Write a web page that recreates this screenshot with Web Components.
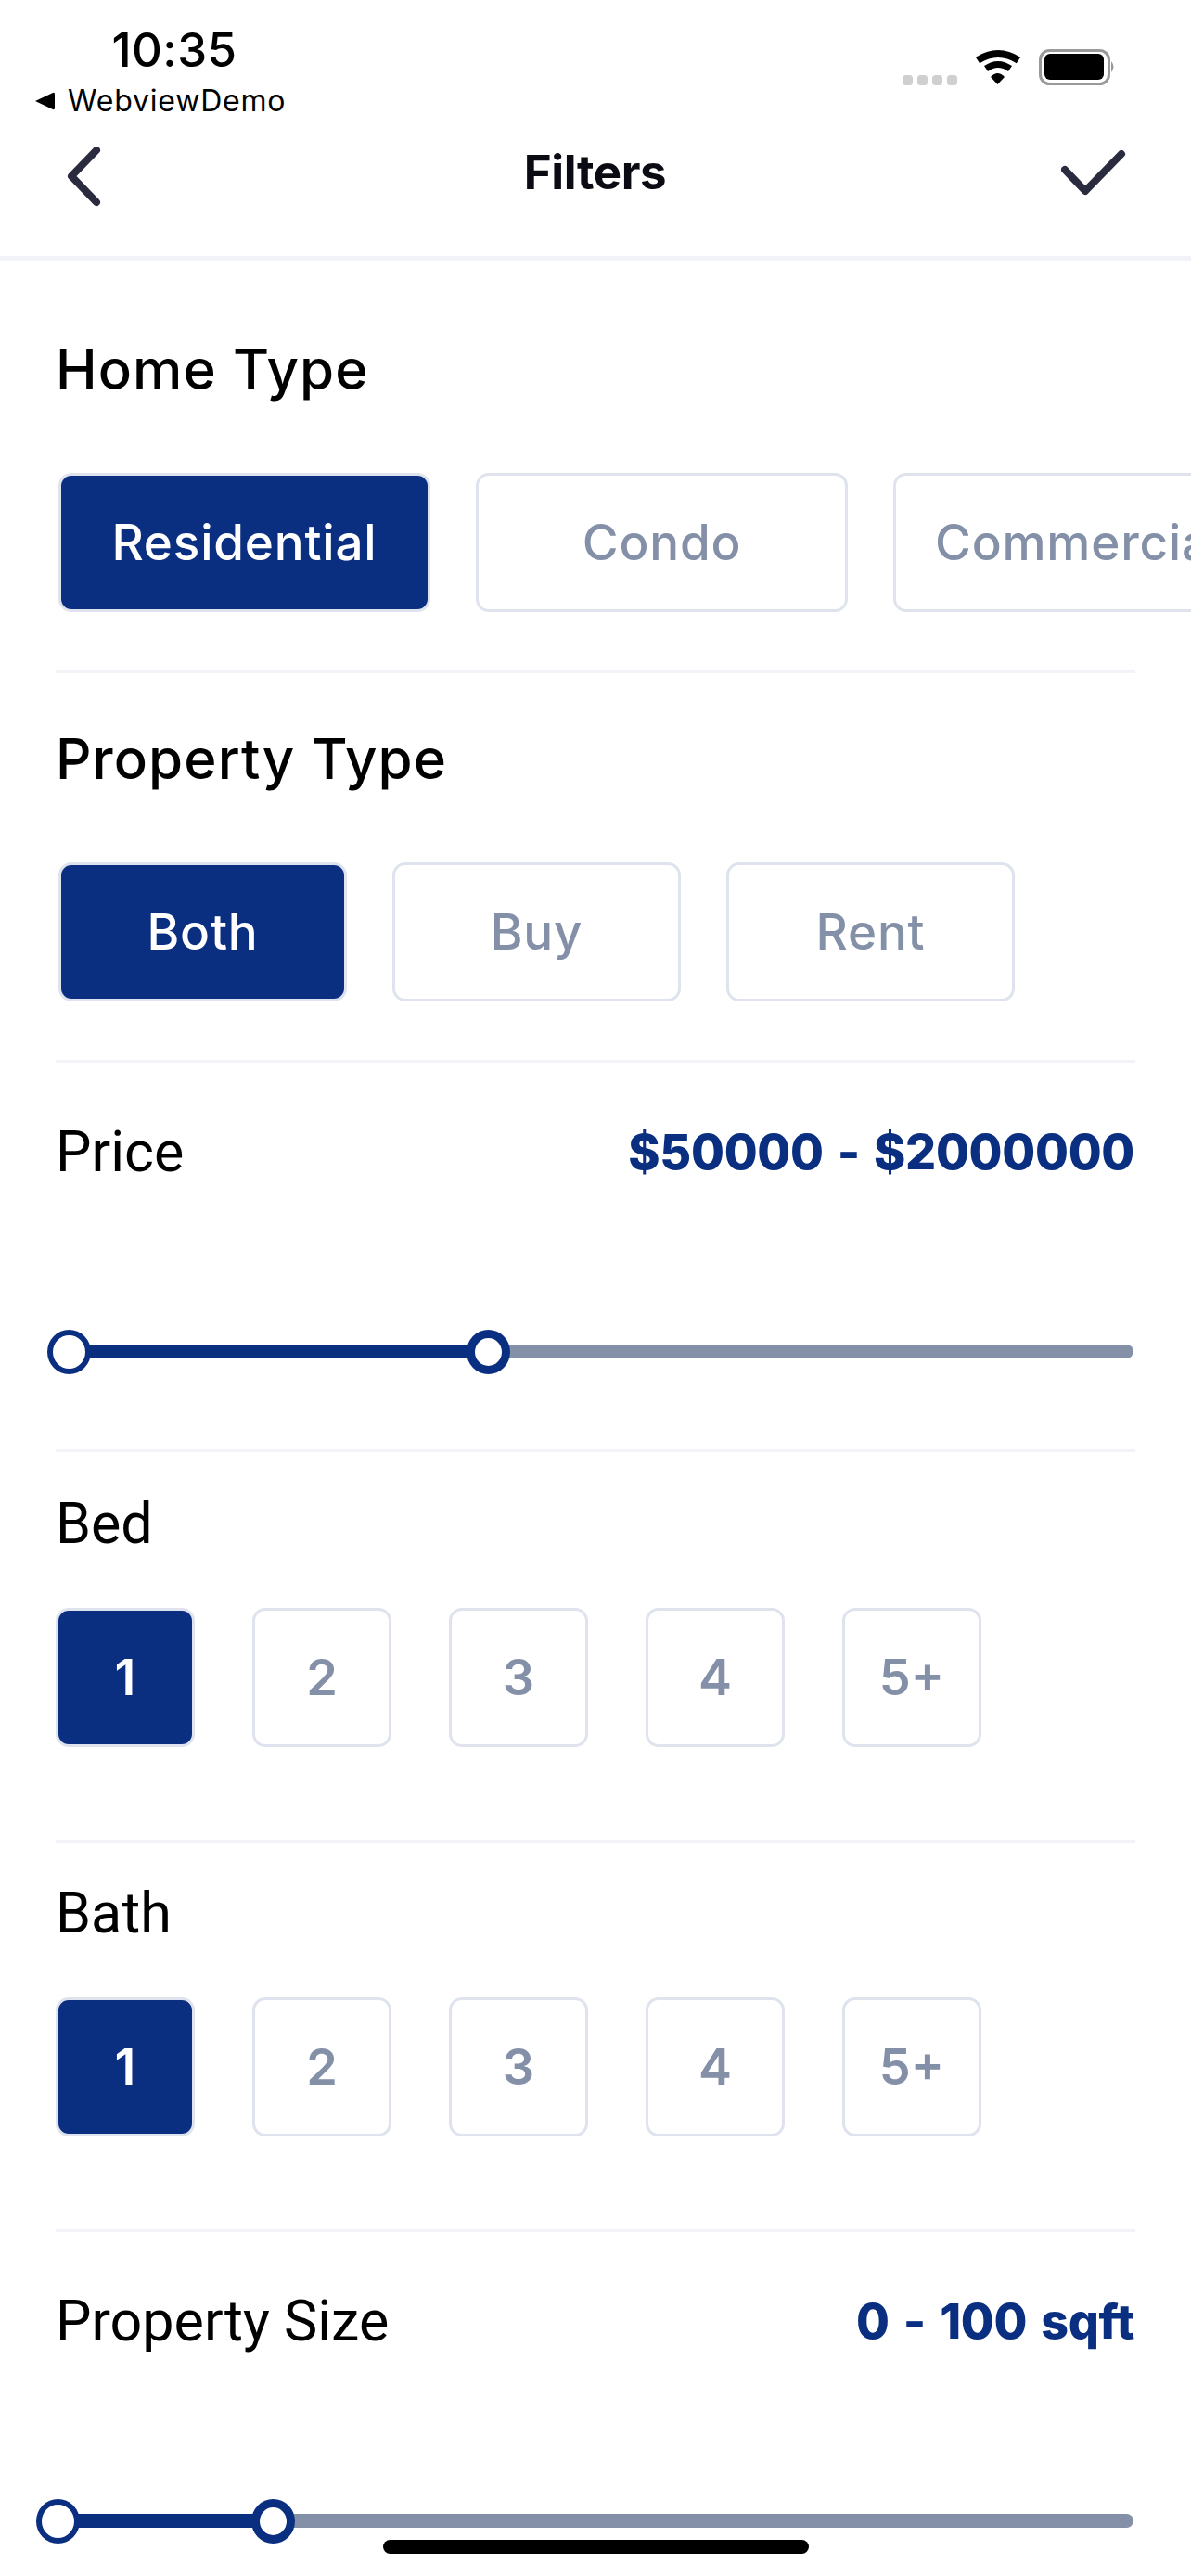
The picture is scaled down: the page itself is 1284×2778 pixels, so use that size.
<!DOCTYPE html>
<html lang="en">
<head>
<meta charset="utf-8">
<title>Filters</title>
<style>
  html, body { margin: 0; padding: 0; background: #fff; }
  body { width: 1284px; height: 2778px; overflow: hidden; position: relative; font-family: Inter, "Liberation Sans", sans-serif; }
</style>
</head>
<body>
  <app-header title="Filters"></app-header>

  <filter-section label="Home Type" pad-top="86" gap="82" pad-bottom="63">
    <chip-group size="wide" inset="3">
      <filter-chip active>Residential</filter-chip>
      <filter-chip>Condo</filter-chip>
      <filter-chip>Commercial</filter-chip>
    </chip-group>
  </filter-section>

  <filter-section label="Property Type" pad-top="62" gap="82" pad-bottom="63">
    <chip-group size="mid" inset="3">
      <filter-chip active>Both</filter-chip>
      <filter-chip>Buy</filter-chip>
      <filter-chip>Rent</filter-chip>
    </chip-group>
  </filter-section>

  <filter-section label="Price" value="$50000 - $2000000" plain pad-top="66" gap="162" pad-bottom="81">
    <range-slider low="51" high="503"></range-slider>
  </filter-section>

  <filter-section label="Bed" plain pad-top="47" gap="61" pad-bottom="100">
    <chip-group size="square">
      <filter-chip active>1</filter-chip>
      <filter-chip>2</filter-chip>
      <filter-chip>3</filter-chip>
      <filter-chip>4</filter-chip>
      <filter-chip>5+</filter-chip>
    </chip-group>
  </filter-section>

  <filter-section label="Bath" plain pad-top="46" gap="61" pad-bottom="100">
    <chip-group size="square">
      <filter-chip active>1</filter-chip>
      <filter-chip>2</filter-chip>
      <filter-chip>3</filter-chip>
      <filter-chip>4</filter-chip>
      <filter-chip>5+</filter-chip>
    </chip-group>
  </filter-section>

  <filter-section label="Property Size" value="0 - 100 sqft" plain pad-top="66" gap="162" pad-bottom="0" last>
    <range-slider low="39" high="271"></range-slider>
  </filter-section>

  <home-indicator></home-indicator>

<script>
class AppHeader extends HTMLElement {
  connectedCallback() {
    this.attachShadow({ mode: 'open' }).innerHTML = `
      <style>
        :host { display: block; height: 276px; border-bottom: 6px solid #f2f3f8; color: #000; }
        .status { display: flex; justify-content: space-between; height: 132px; }
        .left { width: 350px; }
        .time { font: 500 51px/56px Inter, sans-serif; text-align: center; padding: 26px 0 0 26px; width: 324px; letter-spacing: 0.4px; }
        .back { display: flex; align-items: center; gap: 13px; padding: 7px 0 0 38px; font: 400 32px/40px Inter, sans-serif; letter-spacing: 0.8px; }
        .icons { padding: 50px 0 0 0; margin-right: 74px; }
        .nav { display: grid; grid-template-columns: 1fr auto 1fr; align-items: center; height: 108px; padding: 0 72px 0 71px; }
        .nav h1 { margin: 0; font: 700 51px/60px Inter, sans-serif; color: #0b0b14; letter-spacing: -0.4px; }
        .nav .done { justify-self: end; margin: 2px -4px 0 0; }
        .nav .prev { margin-top: 10px; }
        svg { display: block; }
      </style>
      <div class="status">
        <div class="left">
          <div class="time">10:35</div>
          <div class="back">
            <svg width="22" height="20" viewBox="0 0 22 20"><path d="M0 10 L19 1 Q21 0 21 3 V17 Q21 20 19 19 Z" fill="#000"/></svg>
            <span>WebviewDemo</span>
          </div>
        </div>
        <div class="icons">
          <svg width="250" height="46" viewBox="0 0 250 46">
            <g fill="#cfcfcf">
              <rect x="13" y="31" width="11" height="11" rx="3.500"/><rect x="29" y="31" width="11" height="11" rx="3.500"/>
              <rect x="45" y="31" width="11" height="11" rx="3.500"/><rect x="61" y="31" width="11" height="11" rx="3.500"/>
            </g>
            <path d="M94 15 Q116 1 138 15" fill="none" stroke="#000" stroke-width="8"/>
            <path d="M103 24 Q116 15 129 24" fill="none" stroke="#000" stroke-width="7"/>
            <path d="M108 33 Q115.500 25 123 33 L115.500 41 Z" fill="#000"/>
            <rect x="161.500" y="4.500" width="74" height="36" rx="10" fill="#fff" stroke="#999" stroke-width="3"/>
            <rect x="166" y="8" width="64" height="28" rx="6" fill="#000"/>
            <path d="M238 16 Q243 22 238 28 Z" fill="#999"/>
          </svg>
        </div>
      </div>
      <div class="nav">
        <svg class="prev" width="50" height="66" viewBox="0 0 50 66"><path d="M33 4 L6 32 L33 60" fill="none" stroke="#2b2b40" stroke-width="8" stroke-linecap="round" stroke-linejoin="round"/></svg>
        <h1>${this.getAttribute('title')}</h1>
        <svg class="done" width="72" height="50" viewBox="0 0 72 50"><path d="M4 21 L26 44 L65 4" fill="none" stroke="#2b2b40" stroke-width="8" stroke-linecap="round" stroke-linejoin="round"/></svg>
      </div>`;
  }
}

class FilterSection extends HTMLElement {
  connectedCallback() {
    const value = this.getAttribute('value');
    const plain = this.hasAttribute('plain');
    this.attachShadow({ mode: 'open' }).innerHTML = `
      <style>
        :host {
          display: block; margin: 0 60px; box-sizing: border-box;
          border-bottom: 3px solid #f2f3f8;
          padding-top: ${this.getAttribute('pad-top')}px;
          padding-bottom: ${this.getAttribute('pad-bottom')}px;
        }
        :host([last]) { border-bottom: 0; }
        .head { display: flex; justify-content: space-between; align-items: center; height: 60px; margin-bottom: ${this.getAttribute('gap')}px; }
        .label { color: #000; }
        .label.poppins { font: 500 60px/60px Inter, sans-serif; letter-spacing: 1.1px; }
        .label.plain { font: 400 61px/60px Roboto, sans-serif; }
        .value { font: 800 52px/60px Inter, sans-serif; color: #0b2f80; letter-spacing: -0.3px; word-spacing: 4px; padding: 2px 1px 0 0; }
      </style>
      <div class="head">
        <span class="label ${plain ? 'plain' : 'poppins'}">${this.getAttribute('label')}</span>
        ${value ? `<span class="value">${value}</span>` : ''}
      </div>
      <slot></slot>`;
  }
}

class ChipGroup extends HTMLElement {
  connectedCallback() {
    const sizes = { wide: [401, 49], mid: [311, 49], square: [150, 62] };
    const [w, gap] = sizes[this.getAttribute('size')];
    const inset = this.getAttribute('inset') || 0;
    this.attachShadow({ mode: 'open' }).innerHTML = `
      <style>
        :host {
          display: flex; gap: ${gap}px; margin-left: ${inset}px; margin-right: -60px;
          overflow: hidden; --chip-w: ${w}px;
          --chip-size: ${w === 150 ? '54px' : '53px'};
          --chip-weight: ${w === 150 ? 600 : 500};
          --chip-track: ${w === 150 ? '0' : '0.8px'};
        }
      </style>
      <slot></slot>`;
  }
}

class FilterChip extends HTMLElement {
  connectedCallback() {
    this.attachShadow({ mode: 'open' }).innerHTML = `
      <style>
        :host {
          display: flex; flex: none; align-items: center; justify-content: center; box-sizing: border-box;
          width: var(--chip-w); height: 150px; white-space: nowrap; overflow: hidden;
          border: 3px solid #dfe3ee; border-radius: 14px; background: #fff; color: #8490a8;
          font: var(--chip-weight) var(--chip-size)/60px Inter, sans-serif;
          letter-spacing: var(--chip-track);
        }
        :host([active]) { background: #0b2f80; color: #fff; }
      </style>
      <slot></slot>`;
  }
}

class RangeSlider extends HTMLElement {
  connectedCallback() {
    // low and high are page x of the thumbs' left edges
    const lowX = Number(this.getAttribute('low')) - 60;
    const highX = Number(this.getAttribute('high')) - 60;
    this.attachShadow({ mode: 'open' }).innerHTML = `
      <style>
        :host { display: block; position: relative; height: 48px; }
        .track { position: absolute; left: ${lowX + 24}px; right: 2px; top: 16px; height: 15px; background: #8490a8; border-radius: 0 8px 8px 0; }
        .fill { position: absolute; left: ${lowX + 24}px; width: ${highX - lowX}px; top: 16px; height: 15px; background: #0b2f80; }
        .thumb { position: absolute; top: 0; width: 47px; height: 48px; box-sizing: border-box; border-radius: 50%; background: #fff; border: 6px solid #0b2f80; }
        .thumb.high { border-width: 9px; }
      </style>
      <div class="track"></div>
      <div class="fill"></div>
      <div class="thumb" style="left:${lowX}px"></div>
      <div class="thumb high" style="left:${highX}px"></div>`;
  }
}

class HomeIndicator extends HTMLElement {
  connectedCallback() {
    this.attachShadow({ mode: 'open' }).innerHTML = `
      <style>
        :host { display: block; position: absolute; left: 413px; top: 2739px; width: 459px; height: 15px; background: #000; border-radius: 8px; }
      </style>`;
  }
}

customElements.define('app-header', AppHeader);
customElements.define('filter-section', FilterSection);
customElements.define('chip-group', ChipGroup);
customElements.define('filter-chip', FilterChip);
customElements.define('range-slider', RangeSlider);
customElements.define('home-indicator', HomeIndicator);
</script>
</body>
</html>
